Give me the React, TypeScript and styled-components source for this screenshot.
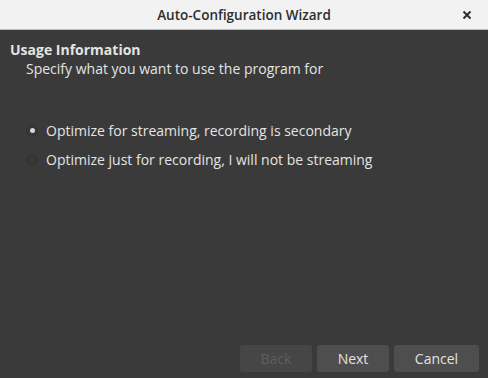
import React from "react";
import styled, { createGlobalStyle } from "styled-components";

const Global = createGlobalStyle`
  html, body { margin: 0; padding: 0; background: #3a3a3a; }
  body { font-family: "Open Sans", "Noto Sans", sans-serif; }
`;

const Window = styled.div`
  width: 488px;
  height: 378px;
  display: flex;
  flex-direction: column;
  background: #3a3a3a;
  overflow: hidden;
`;

const TitleBar = styled.div`
  height: 29px;
  flex: none;
  background: #f2f2f2;
  border-bottom: 1px solid #bdbdbd;
  position: relative;
  display: flex;
  align-items: center;
  justify-content: center;
  color: #2e2e2e;
  font-weight: 600;
  font-size: 13.5px;
`;

const Close = styled.span`
  position: absolute;
  right: 16px;
  top: 50%;
  transform: translateY(-50%);
  display: flex;
`;

const Body = styled.div`
  flex: 1;
  display: flex;
  flex-direction: column;
  padding: 11px 9px 6px 10px;
  color: #e4e4e4;
  font-size: 14px;
  font-weight: 500;
`;

const Heading = styled.div`
  font-weight: 700;
  line-height: 18px;
`;

const Sub = styled.div`
  padding-left: 16px;
  line-height: 19px;
`;

const Options = styled.div`
  margin-top: 43px;
  display: flex;
  flex-direction: column;
  gap: 10px;
  padding-left: 16px;
`;

const Option = styled.label`
  display: flex;
  align-items: center;
  gap: 8px;
  line-height: 19px;
`;

const Radio = styled.span<{ $checked?: boolean }>`
  box-sizing: border-box;
  width: 12px;
  height: 12px;
  border-radius: 50%;
  background: #363636;
  border: 1px solid #323232;
  display: flex;
  align-items: center;
  justify-content: center;
  &::after {
    content: "";
    width: 5px;
    height: 5px;
    border-radius: 50%;
    background: ${(p) => (p.$checked ? "#d8d8d8" : "transparent")};
  }
`;

const Spacer = styled.div`
  flex: 1;
`;

const Buttons = styled.div`
  display: flex;
  justify-content: flex-end;
  gap: 5px;
`;

const Button = styled.button<{ $w: number; $disabled?: boolean }>`
  width: ${(p) => p.$w}px;
  height: 27px;
  border: none;
  border-radius: 3px;
  background: ${(p) => (p.$disabled ? "#464646" : "#4e4e4e")};
  color: ${(p) => (p.$disabled ? "#5e5e5e" : "#e2e2e2")};
  font-family: inherit;
  font-size: 14px;
  font-weight: 500;
  padding: 0;
`;

export default function App() {
  return (
    <>
      <Global />
      <Window>
        <TitleBar>
          Auto-Configuration Wizard
          <Close>
            <svg width="10" height="10" viewBox="0 0 10 10">
              <path d="M1.5 1.5 L8.5 8.5 M8.5 1.5 L1.5 8.5" stroke="#2e2e2e" strokeWidth="2" />
            </svg>
          </Close>
        </TitleBar>
        <Body>
          <Heading>Usage Information</Heading>
          <Sub>Specify what you want to use the program for</Sub>
          <Options>
            <Option>
              <Radio $checked />
              Optimize for streaming, recording is secondary
            </Option>
            <Option>
              <Radio />
              Optimize just for recording, I will not be streaming
            </Option>
          </Options>
          <Spacer />
          <Buttons>
            <Button $w={72} $disabled>Back</Button>
            <Button $w={72}>Next</Button>
            <Button $w={85}>Cancel</Button>
          </Buttons>
        </Body>
      </Window>
    </>
  );
}
